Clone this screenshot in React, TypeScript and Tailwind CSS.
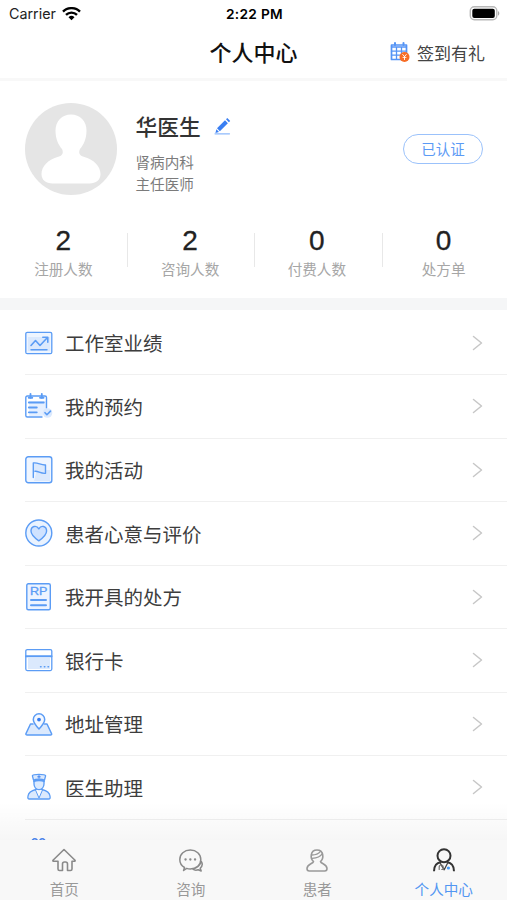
import React from "react";

const BLUE = "#5b9cf5";
const TINT = "#dbe9fd";

function Svg({ w, h, children, className = "" }: { w: number; h: number; children: React.ReactNode; className?: string }) {
  return (
    <svg width={w} height={h} viewBox={`0 0 ${w} ${h}`} fill="none" strokeLinecap="round" strokeLinejoin="round" className={`shrink-0 ${className}`}>
      {children}
    </svg>
  );
}

const icons: Record<string, React.ReactNode> = {
  chart: (
    <Svg w={28} h={28}>
      <rect x="0.8" y="3.3" width="26" height="21.4" rx="1.5" fill="#eef5ff" stroke={BLUE} strokeWidth="1.3" />
      <path d="M3 8h22v14H3z" fill={TINT} />
      <path d="M6 16.5l4.500-5 4.500 5 7-7.500M17.800 8.200h5v5" stroke={BLUE} strokeWidth="1.600" />
      <path d="M6 20.800h16" stroke={BLUE} strokeWidth="1.400" />
    </Svg>
  ),
  calendar: (
    <Svg w={28} h={28}>
      <path d="M4 9h18v12l-5 3H4z" fill="#e6f0ff" />
      <path d="M21.500 16V5.500Q21.500 4 20 4H2.300Q.8 4 .8 5.500V23.500Q.8 25 2.300 25H17" stroke={BLUE} strokeWidth="1.400" />
      <path d="M5.500 1.800v4M16.800 1.800v4" stroke={BLUE} strokeWidth="1.800" />
      <path d="M3.800 5.800h3.400M15.100 5.800h3.400" stroke={BLUE} strokeWidth="2" />
      <path d="M3.800 10.500h15M3.800 15.500h8M3.800 20.300h8" stroke={BLUE} strokeWidth="1.800" />
      <circle cx="22.500" cy="21" r="4.800" fill={TINT} />
      <path d="M20 20.700l1.900 2 3.600-3.600" stroke={BLUE} strokeWidth="1.600" />
    </Svg>
  ),
  flag: (
    <Svg w={28} h={28}>
      <rect x="0.800" y="0.800" width="26" height="26" rx="2.500" fill="#f0f6ff" stroke={BLUE} strokeWidth="1.400" />
      <path d="M12 14h13v11H9z" fill={TINT} />
      <path d="M8.300 21.500V7c4.500-.8 7.500 2.300 12.200 2v8.300c-4.700.6-7.500-2.600-10.500-2" fill={TINT} stroke={BLUE} strokeWidth="1.400" />
    </Svg>
  ),
  heart: (
    <Svg w={28} h={28}>
      <circle cx="13.800" cy="14" r="13" fill="#eaf3ff" stroke={BLUE} strokeWidth="1.400" />
      <path d="M13.800 21.800C9 18.500 6 16 6 12c0-5 5.500-6.200 7.800-2.200C16.100 5.800 21.600 7 21.600 12c0 4-3 6.500-7.800 9.800z" fill="#cfe2ff" stroke={BLUE} strokeWidth="1.400" />
    </Svg>
  ),
  rp: (
    <Svg w={28} h={28}>
      <rect x="1.800" y="0.800" width="23.500" height="26" rx="1.500" fill="#edf4ff" stroke={BLUE} strokeWidth="1.400" />
      <text x="5" y="12.300" textLength="17.500" lengthAdjust="spacingAndGlyphs" fill={BLUE} stroke={BLUE} strokeWidth="0.300" fontFamily="Liberation Sans, sans-serif" fontSize="10.500">RP</text>
      <path d="M6 17h15M6 22.300h15" stroke={BLUE} strokeWidth="2" />
    </Svg>
  ),
  card: (
    <Svg w={28} h={28}>
      <rect x="0.800" y="3.600" width="26" height="21" rx="1.500" fill="#fff" stroke={BLUE} strokeWidth="1.300" />
      <path d="M3 12h22v11H3z" fill={TINT} />
      <path d="M1 10.300h25.500" stroke={BLUE} strokeWidth="2" />
      <path d="M15.500 20.800h.6M19.300 20.800h.6M23 20.800h.6" stroke={BLUE} strokeWidth="1.400" />
    </Svg>
  ),
  map: (
    <Svg w={28} h={28}>
      <path d="M8 14H5.500L1 23.500Q.5 25 2.200 25h23.300q1.500 0 1-1.500L22 14h-2.500" fill={TINT} stroke={BLUE} strokeWidth="1.500" />
      <path d="M14 19c-4-4.300-5.700-6.800-5.700-9.500a5.700 5.700 0 0 1 11.400 0c0 2.700-1.700 5.200-5.700 9.500z" fill="#f4f8ff" stroke={BLUE} strokeWidth="1.500" />
      <circle cx="14" cy="9.600" r="1.900" fill="#347cf0" />
    </Svg>
  ),
  nurse: (
    <Svg w={28} h={28}>
      <path d="M11 16.500c-5 1.200-7.500 2.500-8 6.500-.4 2.300 0 3 1.500 3h19c1.500 0 1.900-.7 1.500-3-.5-4-3-5.300-8-6.500z" fill={TINT} stroke={BLUE} strokeWidth="1.300" />
      <path d="M10.500 17L14 25l3.500-8-3.500-1.500z" fill="#f7faff" stroke={BLUE} strokeWidth="1" />
      <path d="M9 7.500v3.500c0 3.300 2.300 5.700 5 5.700s5-2.400 5-5.700V7.500z" fill="#dcebff" stroke={BLUE} strokeWidth="1.300" />
      <path d="M8.500 7L7.400 2.800C8 .8 20 .8 20.600 2.800L19.500 7C17 5.900 11 5.900 8.500 7z" fill={TINT} stroke={BLUE} strokeWidth="1.300" />
      <path d="M9 8.200c3-1.200 7-1.200 10 0" stroke={BLUE} strokeWidth="1.800" />
      <path d="M14 2.500v2.600M12.700 3.800h2.600" stroke="#347cf0" strokeWidth="0.900" />
    </Svg>
  ),
};

const rows = [
  ["chart", "工作室业绩"],
  ["calendar", "我的预约"],
  ["flag", "我的活动"],
  ["heart", "患者心意与评价"],
  ["rp", "我开具的处方"],
  ["card", "银行卡"],
  ["map", "地址管理"],
  ["nurse", "医生助理"],
];

const stats = [
  ["2", "注册人数"],
  ["2", "咨询人数"],
  ["0", "付费人数"],
  ["0", "处方单"],
];

function Header() {
  return (
    <header className="h-[78px] shrink-0 bg-white">
      <div className="grid h-7 grid-cols-3 items-center pl-[9px] pr-[7px] font-['Inter','Liberation_Sans',sans-serif] text-[14px] text-[#222]">
        <div className="flex items-center gap-[6px]">
          <span className="text-[14.3px]">Carrier</span>
          <Svg w={19} h={15}>
            <g stroke="#000" strokeWidth="2.400" strokeLinecap="butt">
              <path d="M1 4.700a12 12 0 0 1 17 0" />
              <path d="M4 7.900a7.800 7.800 0 0 1 11 0" />
            </g>
            <path d="M9.500 13.200L6.500 10.200a4.300 4.300 0 0 1 6 0z" fill="#000" />
          </Svg>
        </div>
        <span className="text-center text-[13.700px] font-semibold tracking-[0.3px] text-black">2:22 PM</span>
        <div className="flex justify-end pb-[2px]">
          <Svg w={31} h={15}>
            <rect x="1.300" y="0.800" width="26.500" height="13" rx="4" fill="#fff" stroke="#b8b8b8" strokeWidth="1.400" />
            <rect x="3.300" y="2.700" width="22.500" height="9.300" rx="2" fill="#000" />
            <path d="M29 5v4.800c1.800-.8 1.800-4 0-4.800z" fill="#aaa" />
          </Svg>
        </div>
      </div>
      <div className="grid h-12 grid-cols-[1fr_auto_1fr] items-center">
        <span />
        <h1 className="pb-[3px] text-[22px] font-medium leading-none text-[#111]">个人中心</h1>
        <div className="flex items-center justify-end gap-[7px] pr-[22px]">
          <Svg w={20} h={22}>
            <path d="M1.500 4h15v14.500h-15z" fill="#fff" stroke="#5594f5" strokeWidth="1.700" />
            <path d="M1.500 6h15M1.500 10.200h15M1.500 14.200h15M6.500 7v11M11.500 7v11" stroke="#5594f5" strokeWidth="1.300" />
            <path d="M5 2v2M13.500 2v2" stroke="#5594f5" strokeWidth="2" />
            <circle cx="14.500" cy="16" r="5" fill="#f76c24" />
            <path d="M12.700 13.500l1.800 2.100 1.800-2.100M14.500 15.600v3M13 16.400h3" stroke="#fff" strokeWidth="0.900" />
          </Svg>
          <span className="text-[17px] leading-none text-[#444]">签到有礼</span>
        </div>
      </div>
    </header>
  );
}

function Profile() {
  return (
    <section className="h-[220px] shrink-0 border-t-3 border-[#f8f8f8] bg-white">
      <div className="flex h-[140px] pl-[25px] pr-6 pt-[22px]">
        <Svg w={92} h={92}>
          <circle cx="46" cy="46" r="46" fill="#e5e5e5" />
          <path d="M46 11.500c-9 0-15.500 6.500-15.500 16 0 8.500 3 14.500 6.500 18.500 2 4.500 0 7-4.500 8C23 56.500 16.500 63.500 16.500 71c0 6 4.500 9.500 11 9.500h37c6.500 0 11-3.500 11-9.500 0-7.500-6.500-14.500-16-17-4.500-1-6.500-3.500-4.500-8 3.500-4 6.500-10 6.500-18.500 0-9.500-6.500-16-15.500-16z" fill="#fff" />
        </Svg>
        <div className="ml-[18.500px] flex flex-col pt-3">
          <div className="flex items-center gap-[13px]">
            <h2 className="text-[21.7px] font-medium leading-[22px] text-[#333]">华医生</h2>
            <Svg w={17} h={18}>
              <path d="M3 11.300L11 3.300l2.900 2.900L5.900 14.200z" fill="#397ef2" />
              <path d="M12 2.300l1.300-1.300 2.900 2.900-1.300 1.300z" fill="#397ef2" />
              <path d="M2.400 12.300l2.600 2.600-3.600 1.100z" fill="#397ef2" />
              <path d="M1 16.800h14.500" stroke="#8db9fb" strokeWidth="1.200" />
            </Svg>
          </div>
          <p className="mt-[13.500px] text-[14.600px] leading-[22px] text-[#7b7b7b]">肾病内科<br />主任医师</p>
        </div>
        <div className="ml-auto mt-[31px] flex h-[30px] w-[80px] items-center justify-center rounded-full border-[1.5px] border-[#9bc2fb] text-[14.5px] leading-none text-[#5b9af5]">已认证</div>
      </div>
      <div className="grid grid-cols-4 pt-[6px]">
        {stats.map(([value, label], i) => (
          <div key={label} className="flex flex-col items-center">
            <div className="font-['Liberation_Sans',sans-serif] text-[28px] leading-[28px] text-[#222] [-webkit-text-stroke:0.3px_#222]">{value}</div>
            <div className="mt-[3px] text-[14.600px] leading-[21px] text-[#a6a6a6]">{label}</div>
            {i < 3 && <div className={`-mt-[46px] mb-3 h-[34px] w-px bg-[#e8e8e8] ${i === 2 ? "ml-[132px]" : "ml-[128px]"}`} />}
          </div>
        ))}
      </div>
    </section>
  );
}

function TabIcon({ i }: { i: number }) {
  if (i === 0)
    return <Svg w={26} h={26}><path d="M2 13.200L13 2.500l11 10.700q.5 1-.8 1h-2.200V22q0 1.500-1.500 1.500h-3V17c0-1.400-.7-2-2-2h-1c-1.300 0-2 .6-2 2v6.500h-3q-1.500 0-1.500-1.500v-7.800H2.800q-1.300 0-.8-1z" stroke="#8a8a8a" strokeWidth="1.600" /></Svg>;
  if (i === 1)
    return (
      <Svg w={26} h={26}>
        <path d="M6.500 20.500C3.500 18.800 1.800 16 1.800 12.500 1.800 7 6.300 3 12.300 3s10.500 4 10.500 9.500S18.300 22 12.300 22c-1.300 0-2.500-.2-3.600-.6L5.600 23.500zM23.300 14.500c1.500 2.300.8 5-1.100 6.700l1 2.800-3-1.300c-1.900.7-4 .5-5.600-.7 3.800-.6 7.200-3.400 8.700-7.500z" stroke="#8a8a8a" strokeWidth="1.500" />
        <path d="M7.500 12.500h.1M12.300 12.500h.1M17 12.500h.1" stroke="#8a8a8a" strokeWidth="2.300" />
      </Svg>
    );
  if (i === 2)
    return (
      <Svg w={26} h={26}>
        <path d="M9.500 14.500C6 11.500 6 3 13 3s7 8.500 3.500 11.500c.5 2.500 6.500 2.500 6.500 7 0 1.800-.8 2.500-2.300 2.500H5.300C3.800 24 3 23.300 3 21.500 3 17 9 17 9.500 14.500z" stroke="#999" strokeWidth="1.600" />
        <path d="M8 8c3.700 0 6.500-1.200 8.500-3.600M8.200 11.300c5-.2 8.300-1.900 10.300-5" stroke="#999" strokeWidth="1.300" />
      </Svg>
    );
  return (
    <Svg w={26} h={26}>
      <circle cx="13" cy="8.700" r="6.500" stroke="#333" strokeWidth="2" />
      <path d="M3 24.300c0-5 2.500-8.400 7-9.200M16 15.100c4.500.8 7 4.200 7 9.200" stroke="#333" strokeWidth="2" strokeLinecap="butt" />
      <path d="M9 15.800l4.200 7M16.800 15.800l-3.600 7" stroke="#444" strokeWidth="1.300" />
      <path d="M8.200 22.500v-2.500a2 2 0 0 1 4 0v2.500h-1.500" stroke="#777" strokeWidth="1.200" />
      <circle cx="17.400" cy="21" r="1.600" fill="#489bf5" />
    </Svg>
  );
}

export default function App() {
  return (
    <div className="relative flex h-[900px] w-full flex-col overflow-hidden bg-white font-['Noto_Sans_CJK_SC',sans-serif]">
      <Header />
      <Profile />
      <div className="h-[12px] shrink-0 bg-[#f5f6f7]" />
      <main className="min-h-0 flex-1 overflow-hidden pt-[1.600px]">
        {rows.map(([icon, label]) => (
          <div key={icon} className="ml-[25px] flex h-[63.500px] items-center border-b border-[#f0f0f0] pr-[23px]">
            {icons[icon]}
            <span className="ml-3 text-[19.5px] leading-none text-[#3d3d3d]">{label}</span>
            <Svg w={12} h={18} className="ml-auto"><path d="M1.500 2.500l8 6.500-8 6.500" stroke="#c7c7c7" strokeWidth="1.500" /></Svg>
          </div>
        ))}
        <div className="ml-[25px] pt-[18px]">
          <Svg w={28} h={28}>
            <path d="M7.500 2q2.300-2.400 4.600 0M15 2q2.300-2.400 4.600 0" stroke="#4a86f3" strokeWidth="1.600" />
          </Svg>
        </div>
      </main>
      <div className="pointer-events-none absolute bottom-[60px] left-0 h-[38px] w-full bg-linear-to-b from-transparent to-black/[0.035]" />
      <nav className="absolute bottom-0 left-0 grid h-[60px] w-full grid-cols-4 bg-[#f8f8f8] pl-px">
        {["首页", "咨询", "患者", "个人中心"].map((label, i) => (
          <div key={label} className={`flex flex-col items-center pt-[7px] text-[14.600px] leading-[20px] ${i === 3 ? "text-[#5296f2]" : "text-[#999]"}`}>
            <TabIcon i={i} />
            <span className="mt-[6px]">{label}</span>
          </div>
        ))}
      </nav>
    </div>
  );
}
